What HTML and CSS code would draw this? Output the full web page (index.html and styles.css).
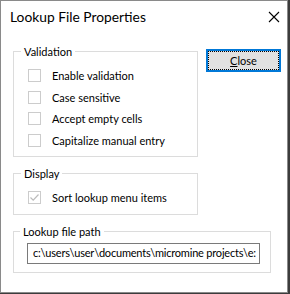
FILE: index.html
```html
<!DOCTYPE html>
<html>
<head>
<meta charset="utf-8">
<link rel="stylesheet" href="styles.css">
</head>
<body>
<div class="window">
  <div class="titlebar">
    <span class="title">Lookup File Properties</span>
    <svg class="close-x" width="12" height="12" viewBox="0 0 12 12"><path d="M1 1 L11 11 M11 1 L1 11" stroke="#000" stroke-width="1.1" fill="none"/></svg>
  </div>
  <div class="content">
    <div class="top">
      <div class="groups">
        <fieldset class="group validation">
          <legend>Validation</legend>
          <label class="row"><span class="cb"></span>Enable validation</label>
          <label class="row"><span class="cb"></span>Case sensitive</label>
          <label class="row"><span class="cb"></span>Accept empty cells</label>
          <label class="row"><span class="cb"></span>Capitalize manual entry</label>
        </fieldset>
        <fieldset class="group display">
          <legend>Display</legend>
          <label class="row"><span class="cb checked"><svg width="11" height="11" viewBox="0 0 11 11"><path d="M1.5 5.5 L4.2 8.2 L9.5 2.5" stroke="#bcbcbc" stroke-width="1.2" fill="none"/></svg></span>Sort lookup menu items</label>
        </fieldset>
      </div>
      <div class="btn"><span class="focus"><span class="u">C</span>lose</span></div>
    </div>
    <fieldset class="group path">
      <legend>Lookup file path</legend>
      <div class="textbox">c:\users\user\documents\micromine projects\e:</div>
    </fieldset>
  </div>
</div>
</body>
</html>
```

FILE: styles.css
```css
html, body {
  margin: 0;
  padding: 0;
}
body {
  background: #3c3c3c;
  font-family: Lato, "Noto Sans", sans-serif;
  color: #000;
}
.window {
  width: 288px;
  height: 293px;
  box-sizing: border-box;
  border: 1px solid #8a8a8a;
  background: #fff;
  overflow: hidden;
}
.titlebar {
  height: 31px;
  display: flex;
  align-items: center;
  justify-content: space-between;
  padding: 0 7px 0 9px;
}
.title {
  font-size: 13.8px;
  line-height: 20px;
  margin-top: 1px;
}
.close-x {
  display: block;
}
.content {
  padding: 12px 0 0 12px;
}
.top {
  display: flex;
  gap: 8px;
}
.groups {
  width: 185px;
  display: flex;
  flex-direction: column;
  gap: 9px;
}
.group {
  margin: 0;
  border: 1px solid #dcdcdc;
  min-width: 0;
  box-sizing: border-box;
  font-size: 11px;
}
.group legend {
  padding: 0 3px;
  margin-left: -7px;
  line-height: 15px;
  font-size: 11px;
}
.validation {
  padding: 6px 0 5px 14px;
}
.display {
  padding: 6px 0 5px 14px;
}
.row {
  display: flex;
  align-items: center;
  height: 21.5px;
  line-height: 15px;
}
.cb {
  width: 13px;
  height: 13px;
  box-sizing: border-box;
  border: 1px solid #cccccc;
  background: #fff;
  margin-right: 11px;
  display: flex;
  align-items: center;
  justify-content: center;
  flex: none;
}
.btn {
  width: 75px;
  height: 23px;
  box-sizing: border-box;
  border: 2px solid #0078d7;
  background: #e1e1e1;
  font-size: 11px;
  display: flex;
  margin-top: 5px;
}
.focus {
  flex: 1;
  border: 1px dotted #000;
  display: flex;
  align-items: center;
  justify-content: center;
  line-height: 15px;
}
.u {
  text-decoration: underline;
}
.path {
  width: 258px;
  margin-top: 9px;
  padding: 4px 0 8px 13px;
}
.textbox {
  width: 233px;
  height: 21px;
  box-sizing: border-box;
  border: 1px solid #7a7a7a;
  padding: 0 0 0 5px;
  line-height: 18px;
  font-size: 11px;
  letter-spacing: -0.2px;
  white-space: nowrap;
  overflow: hidden;
}
```
